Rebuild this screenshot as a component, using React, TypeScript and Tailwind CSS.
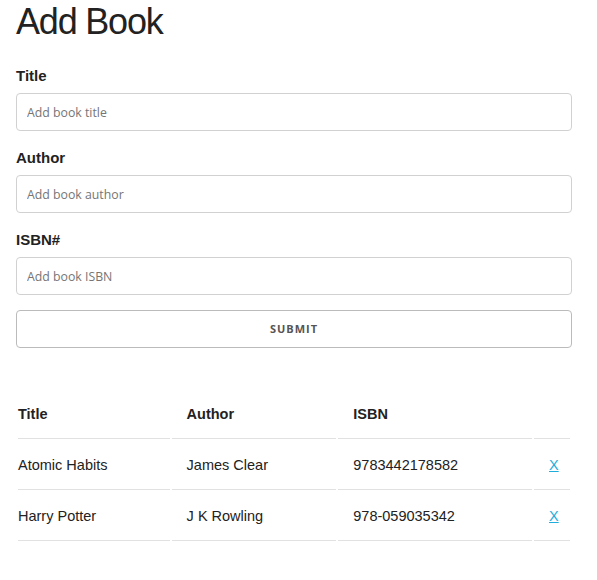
import React from "react";

const books = [
    {title: "Atomic Habits", author: "James Clear", isbn: "9783442178582"},
    {title: "Harry Potter", author: "J K Rowling", isbn: "978-059035342"},
];

function Field({label, placeholder}: {label: string; placeholder: string}) {
    return (
        <div className="mb-[16px]">
            <label className="block mb-[6px] text-[15px] font-bold leading-[22px] text-[#222]">{label}</label>
            <input
                type="text"
                placeholder={placeholder}
                className="w-full h-[38px] px-[10px] border border-[#D1D1D1] rounded-[4px] bg-white text-[12.3px] font-['Open_Sans',sans-serif] placeholder:text-[#757575] outline-none"/>
        </div>
    );
}

export default function App() {
    return (
        <div className="bg-white min-h-screen font-['Liberation_Sans',Arial,sans-serif] text-[#222]">
            <div className="w-[556px] ml-[16px]">
                <h1 className="text-[36px] leading-[42px] font-normal tracking-[-1.2px] mb-[22px] pt-[1px]">Add Book</h1>

                <form onSubmit={e => e.preventDefault()}>
                    <Field label="Title" placeholder="Add book title"/>
                    <Field label="Author" placeholder="Add book author"/>
                    <Field label="ISBN#" placeholder="Add book ISBN"/>
                    <button
                        type="submit"
                        className="w-full h-[38px] mt-[-1px] border border-[#BBB] rounded-[4px] bg-transparent text-[11px] font-bold uppercase tracking-[1px] text-[#555] font-['Open_Sans',sans-serif]">
                        Submit
                    </button>
                </form>

                <table className="mt-[40px] border-separate border-spacing-[2px] text-[14.5px] leading-[24px] text-left">
                    <thead>
                        <tr>
                            <th className="w-[152px] pr-[15px] py-[12px] font-bold border-b border-[#E1E1E1]">Title</th>
                            <th className="w-[165px] px-[15px] py-[12px] font-bold border-b border-[#E1E1E1]">Author</th>
                            <th className="w-[194px] px-[15px] py-[12px] font-bold border-b border-[#E1E1E1]">ISBN</th>
                            <th className="w-[36px] pl-[15px] py-[12px] border-b border-[#E1E1E1]"></th>
                        </tr>
                    </thead>
                    <tbody>
                        {books.map(book => (
                            <tr key={book.isbn}>
                                <td className="pr-[15px] py-[12px] border-b border-[#E1E1E1]">{book.title}</td>
                                <td className="px-[15px] py-[12px] border-b border-[#E1E1E1]">{book.author}</td>
                                <td className="px-[15px] py-[12px] border-b border-[#E1E1E1]">{book.isbn}</td>
                                <td className="pl-[15px] py-[12px] border-b border-[#E1E1E1]">
                                    <a href="#" className="text-[#1EAEDB] underline">X</a>
                                </td>
                            </tr>
                        ))}
                    </tbody>
                </table>
            </div>
        </div>
    );
}
